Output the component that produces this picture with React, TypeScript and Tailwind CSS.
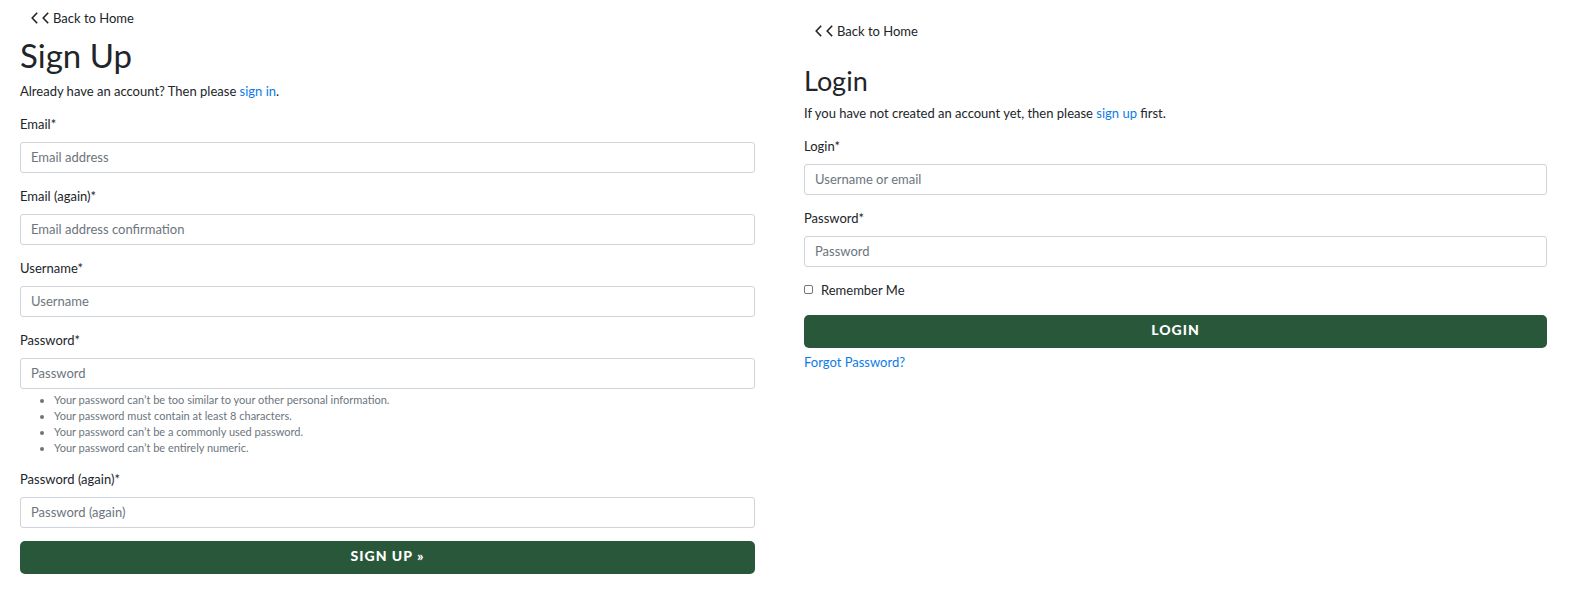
import { useId } from "react";

function BackLink() {
  return (
    <a href="#home" className="inline-flex items-center gap-1 px-[11px] leading-5">
      <Chevron />
      <Chevron />
      <span>Back to Home</span>
    </a>
  );
}

function Chevron() {
  return (
    <svg width="7" height="12" viewBox="0 0 7 12" fill="none" stroke="currentColor" strokeWidth="1.6" aria-hidden="true">
      <path d="M6.2 0.8 1.2 6l5 5.2" />
    </svg>
  );
}

type FieldProps = { label: string; placeholder: string; type?: string; hints?: string[] };

function Field({ label, placeholder, type = "text", hints }: FieldProps) {
  const id = useId();
  return (
    <div className="mb-[13px]">
      <label htmlFor={id} className="mb-2 block leading-5">
        {label}*
      </label>
      <input
        id={id}
        type={type}
        placeholder={placeholder}
        className="block h-[31px] w-full rounded-[3px] border border-[#ced4da] bg-white px-[10px] placeholder:text-[#6c757d]"
      />
      {hints && (
        <ul className="mt-[3px] list-disc pl-[34px] text-[11px] leading-4 text-[#6c757d]">
          {hints.map((hint) => (
            <li key={hint}>{hint}</li>
          ))}
        </ul>
      )}
    </div>
  );
}

function SubmitButton({ children }: { children: string }) {
  return (
    <button
      type="submit"
      className="block h-[33px] w-full rounded-[5px] bg-[#28573a] pb-[2px] text-sm font-black tracking-[1px] text-white uppercase"
    >
      {children}
    </button>
  );
}

const passwordHints = [
  "Your password can’t be too similar to your other personal information.",
  "Your password must contain at least 8 characters.",
  "Your password can’t be a commonly used password.",
  "Your password can’t be entirely numeric.",
];

export default function App() {
  return (
    <main className="grid grid-cols-[735fr_743fr] gap-[49px] bg-white pr-[23px] pl-5 font-['Lato',sans-serif] text-[13px] text-[#212529]">
      <section className="pt-2">
        <BackLink />
        <h1 className="mt-[5px] text-[33px] leading-10">Sign Up</h1>
        <p className="mt-[6px] mb-[13px] leading-5">
          Already have an account? Then please{" "}
          <a href="#login" className="text-[#0c7be8]">
            sign in
          </a>
          .
        </p>
        <form>
          <Field label="Email" placeholder="Email address" type="email" />
          <Field label="Email (again)" placeholder="Email address confirmation" type="email" />
          <Field label="Username" placeholder="Username" />
          <Field label="Password" placeholder="Password" type="password" hints={passwordHints} />
          <Field label="Password (again)" placeholder="Password (again)" type="password" />
          <SubmitButton>Sign Up »</SubmitButton>
        </form>
      </section>
      <section className="pt-[21px]">
        <BackLink />
        <h2 className="mt-[22px] text-[27px] leading-8">Login</h2>
        <p className="mt-[6px] mb-[13px] leading-5">
          If you have not created an account yet, then please{" "}
          <a href="#signup" className="text-[#0c7be8]">
            sign up
          </a>{" "}
          first.
        </p>
        <form>
          <Field label="Login" placeholder="Username or email" />
          <Field label="Password" placeholder="Password" type="password" />
          <label className="mb-[15px] flex items-center gap-2 leading-5">
            <input type="checkbox" className="size-[9px] appearance-none rounded-[2px] border border-[#767676] checked:bg-[#28573a]" />
            Remember Me
          </label>
          <SubmitButton>Login</SubmitButton>
          <a href="#forgot" className="mt-1 inline-block leading-5 text-[#0c7be8]">
            Forgot Password?
          </a>
        </form>
      </section>
    </main>
  );
}
